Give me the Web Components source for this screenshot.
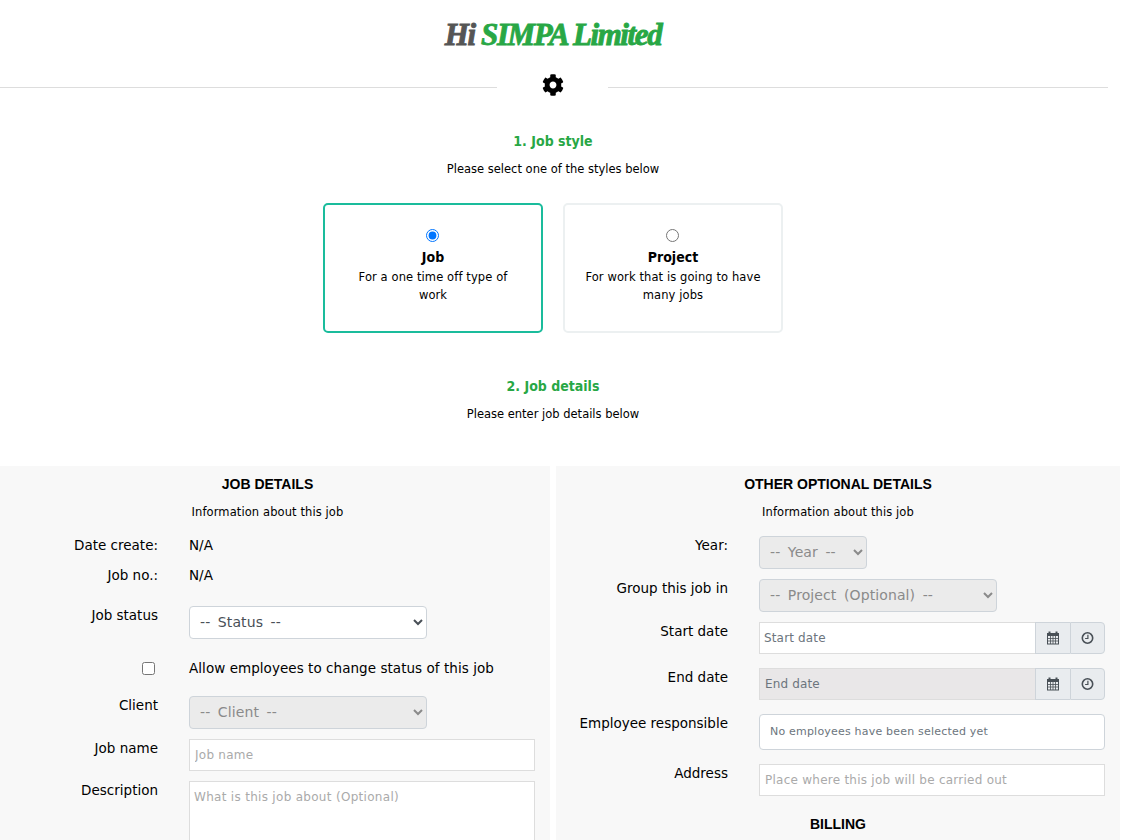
<!DOCTYPE html>
<html>
<head>
<meta charset="utf-8">
<title>Job</title>
<style>
  html, body { margin: 0; padding: 0; background: #fff; }
  body { font-family: "DejaVu Sans", sans-serif; font-size: 14px; color: #000; height: 840px; overflow: hidden; }
  .panels { display: grid; grid-template-columns: 550px 564px; gap: 6px; margin-top: 42px; }
</style>
</head>
<body>
<job-header>
  <span style="color:#555">Hi</span> <span style="color:#28a745">SIMPA Limited</span>
</job-header>
<section-heading style="margin-top:30px" title="1. Job style" text="Please select one of the styles below"></section-heading>
<style-picker>
  <style-card selected title="Job" text="For a one time off type of work"></style-card>
  <style-card title="Project" text="For work that is going to have many jobs"></style-card>
</style-picker>
<section-heading style="margin-top:43px" title="2. Job details" text="Please enter job details below"></section-heading>
<div class="panels">
  <form-panel title="JOB DETAILS" text="Information about this job" label-width="158" title-width="535">
    <form-row label="Date create:" style="margin-top:8px;height:30px" plain>N/A</form-row>
    <form-row label="Job no.:" style="height:30px" plain>N/A</form-row>
    <form-row label="Job status" style="margin-top:16px"><form-select width="238" text="-- Status --"></form-select></form-row>
    <form-check style="margin-top:19px">Allow employees to change status of this job</form-check>
    <form-row label="Client" style="margin-top:18px"><form-select width="238" disabled text="-- Client --"></form-select></form-row>
    <form-row label="Job name" style="margin-top:10px"><form-input placeholder="Job name"></form-input></form-row>
    <form-row label="Description" style="margin-top:10px"><form-area placeholder="What is this job about (Optional)"></form-area></form-row>
  </form-panel>
  <form-panel title="OTHER OPTIONAL DETAILS" text="Information about this job" label-width="172" title-width="564">
    <form-row label="Year:" style="margin-top:14px"><form-select width="108" disabled text="-- Year --"></form-select></form-row>
    <form-row label="Group this job in" style="margin-top:10px"><form-select width="238" disabled text="-- Project (Optional) --"></form-select></form-row>
    <form-row label="Start date" style="margin-top:10px"><date-input placeholder="Start date"></date-input></form-row>
    <form-row label="End date" style="margin-top:14px"><date-input disabled placeholder="End date"></date-input></form-row>
    <form-row label="Employee responsible" style="margin-top:14px"><employee-box>No employees have been selected yet</employee-box></form-row>
    <form-row label="Address" style="margin-top:14px"><form-input placeholder="Place where this job will be carried out"></form-input></form-row>
    <panel-title style="margin-top:18px">BILLING</panel-title>
  </form-panel>
</div>

<script>
const LABEL_FONT = `"DejaVu Sans", sans-serif`;

class JobHeader extends HTMLElement {
  constructor() {
    super();
    this.attachShadow({ mode: "open" });
    this.shadowRoot.innerHTML = `
      <style>
        :host { display: block; width: 1106px; }
        h1 {
          margin: 0;
          padding-top: 15px;
          height: 40px;
          text-align: center;
          font: italic bold 31px/40px "Liberation Serif", serif;
          letter-spacing: -1.4px;
          -webkit-text-stroke: .9px currentColor;
        }
        .rule { display: flex; align-items: center; width: 1108px; height: 32px; margin-top: 14px; }
        .rule i { height: 1px; background: #ddd; margin-top: 5px; }
        .rule i:first-child { width: 497px; }
        .rule i:last-child { flex: 1; }
        .rule span { width: 111px; display: flex; justify-content: center; }
        svg { width: 22px; height: 22px; display: block; margin-top: -1px; }
      </style>
      <h1><slot></slot></h1>
      <div class="rule">
        <i></i>
        <span><svg viewBox="0 0 512 512"><path d="M487.4 315.7l-42.6-24.6c4.3-23.2 4.3-47 0-70.2l42.6-24.6c4.9-2.8 7.1-8.6 5.5-14-11.1-35.6-30-67.8-54.7-94.6-3.8-4.1-10-5.1-14.8-2.3L380.8 110c-17.9-15.4-38.5-27.3-60.8-35.1V25.8c0-5.6-3.9-10.5-9.4-11.7-36.7-8.2-74.3-7.8-109.2 0-5.5 1.2-9.4 6.1-9.4 11.7V75c-22.2 7.9-42.8 19.8-60.8 35.1L88.7 85.5c-4.9-2.8-11-1.9-14.8 2.3-24.7 26.7-43.6 58.9-54.7 94.6-1.7 5.4.6 11.2 5.5 14L67.3 221c-4.3 23.2-4.3 47 0 70.2l-42.6 24.6c-4.9 2.8-7.1 8.6-5.5 14 11.1 35.6 30 67.8 54.7 94.6 3.8 4.1 10 5.1 14.8 2.3l42.6-24.6c17.9 15.4 38.5 27.3 60.8 35.1v49.2c0 5.6 3.9 10.5 9.4 11.7 36.7 8.2 74.3 7.8 109.2 0 5.5-1.2 9.4-6.1 9.4-11.7v-49.2c22.2-7.9 42.8-19.8 60.8-35.1l42.6 24.6c4.9 2.8 11 1.9 14.8-2.3 24.7-26.7 43.6-58.9 54.7-94.6 1.5-5.5-.7-11.3-5.6-14.1zM256 336c-44.1 0-80-35.9-80-80s35.9-80 80-80 80 35.9 80 80-35.9 80-80 80z"/></svg></span>
        <i></i>
      </div>
    `;
  }
}

class SectionHeading extends HTMLElement {
  connectedCallback() {
    if (this.shadowRoot) return;
    this.attachShadow({ mode: "open" });
    this.shadowRoot.innerHTML = `
      <style>
        :host { display: block; width: 1106px; text-align: center; }
        h2 { margin: 0; font: bold 14px/20px ${LABEL_FONT}; font-stretch: condensed; color: #28a745; }
        p { margin: 8px 0 0; font: 11.5px/20px ${LABEL_FONT}; color: #000; }
      </style>
      <h2>${this.getAttribute("title")}</h2>
      <p>${this.getAttribute("text")}</p>
    `;
  }
}

class StylePicker extends HTMLElement {
  constructor() {
    super();
    this.attachShadow({ mode: "open" });
    this.shadowRoot.innerHTML = `
      <style>
        :host { display: flex; justify-content: center; gap: 20px; width: 1106px; margin-top: 24px; }
      </style>
      <slot></slot>
    `;
  }
}

class StyleCard extends HTMLElement {
  connectedCallback() {
    if (this.shadowRoot) return;
    const selected = this.hasAttribute("selected");
    this.attachShadow({ mode: "open" });
    this.shadowRoot.innerHTML = `
      <style>
        :host {
          display: block;
          box-sizing: border-box;
          width: 220px;
          height: 130px;
          padding: 24px 20px 0;
          border: 2px solid ${selected ? "#1abc9c" : "#ecf0f1"};
          border-radius: 5px;
          text-align: center;
        }
        input { display: block; margin: 0 0 0 calc(50% - 7px); width: 13px; height: 13px; }
        b { display: block; margin-top: 5px; font: bold 14px/20px ${LABEL_FONT}; font-stretch: condensed; }
        p { margin: 1px 0 0; font: 11.5px/18px ${LABEL_FONT}; letter-spacing: .1px; }
      </style>
      <input type="radio" name="job-style" ${selected ? "checked" : ""}>
      <b>${this.getAttribute("title")}</b>
      <p>${this.getAttribute("text")}</p>
    `;
  }
}

class PanelTitle extends HTMLElement {
  constructor() {
    super();
    this.attachShadow({ mode: "open" });
    this.shadowRoot.innerHTML = `
      <style>
        :host {
          display: block;
          width: var(--title-width);
          text-align: center;
          font: bold 14px/20px "Liberation Sans", Arial, sans-serif;
          color: #000;
        }
      </style>
      <slot></slot>
    `;
  }
}

class FormPanel extends HTMLElement {
  connectedCallback() {
    if (this.shadowRoot) return;
    this.style.setProperty("--label-width", this.getAttribute("label-width") + "px");
    this.style.setProperty("--title-width", this.getAttribute("title-width") + "px");
    this.attachShadow({ mode: "open" });
    this.shadowRoot.innerHTML = `
      <style>
        :host { display: block; background: #f8f8f8; padding-top: 8px; height: 366px; overflow: hidden; }
        .sub { margin: 8px 0 0; width: var(--title-width); text-align: center; font: 11.5px/20px ${LABEL_FONT}; letter-spacing: .1px; }
      </style>
      <panel-title>${this.getAttribute("title")}</panel-title>
      <p class="sub">${this.getAttribute("text")}</p>
      <slot></slot>
    `;
  }
}

class FormRow extends HTMLElement {
  connectedCallback() {
    if (this.shadowRoot) return;
    const plain = this.hasAttribute("plain");
    this.attachShadow({ mode: "open" });
    this.shadowRoot.innerHTML = `
      <style>
        :host {
          display: grid;
          grid-template-columns: var(--label-width) 346px;
          column-gap: 31px;
          font: 13.5px/18px ${LABEL_FONT};
          ${plain ? "align-items: center;" : ""}
        }
        label { text-align: right; white-space: nowrap; }
      </style>
      <label>${this.getAttribute("label")}</label>
      <div><slot></slot></div>
    `;
  }
}

class FormCheck extends HTMLElement {
  constructor() {
    super();
    this.attachShadow({ mode: "open" });
    this.shadowRoot.innerHTML = `
      <style>
        :host {
          display: grid;
          grid-template-columns: var(--label-width) 346px;
          column-gap: 31px;
          font: 13.5px/20px ${LABEL_FONT};
          letter-spacing: .05px;
        }
        div { display: flex; justify-content: flex-end; padding-right: 3px; }
        input { margin: 4px 0 0; width: 13px; height: 13px; }
        span { white-space: nowrap; }
      </style>
      <div><input type="checkbox"></div>
      <span><slot></slot></span>
    `;
  }
}

class FormSelect extends HTMLElement {
  connectedCallback() {
    if (this.shadowRoot) return;
    const disabled = this.hasAttribute("disabled");
    this.attachShadow({ mode: "open" });
    this.shadowRoot.innerHTML = `
      <style>
        :host { display: block; }
        select {
          display: block;
          box-sizing: border-box;
          width: ${this.getAttribute("width")}px;
          height: 33px;
          padding: 0 6px 2px;
          border: 1px solid #ced4da;
          border-radius: 4px;
          background-color: ${disabled ? "#ebebeb" : "#fff"};
          color: ${disabled ? "#8a8a8a" : "#495057"};
          opacity: 1;
          font: 14px ${LABEL_FONT};
          letter-spacing: .1px;
          word-spacing: 3px;
        }
      </style>
      <select ${disabled ? "disabled" : ""}><option>${this.getAttribute("text")}</option></select>
    `;
  }
}

class FormInput extends HTMLElement {
  connectedCallback() {
    if (this.shadowRoot) return;
    this.attachShadow({ mode: "open" });
    this.shadowRoot.innerHTML = `
      <style>
        :host { display: block; }
        input {
          display: block;
          box-sizing: border-box;
          width: 346px;
          height: 32px;
          padding: 0 5px;
          border: 1px solid #ddd;
          background: #fff;
          font: 12px ${LABEL_FONT};
          letter-spacing: .25px;
          outline: none;
        }
        input::placeholder { color: #aaa; opacity: 1; }
      </style>
      <input type="text" placeholder="${this.getAttribute("placeholder")}">
    `;
  }
}

class FormArea extends HTMLElement {
  connectedCallback() {
    if (this.shadowRoot) return;
    this.attachShadow({ mode: "open" });
    this.shadowRoot.innerHTML = `
      <style>
        :host { display: block; }
        textarea {
          display: block;
          box-sizing: border-box;
          width: 346px;
          height: 100px;
          padding: 7px 4px;
          border: 1px solid #ddd;
          background: #fff;
          resize: none;
          font: 12px/16px ${LABEL_FONT};
          letter-spacing: .3px;
        }
        textarea::placeholder { color: #aaa; opacity: 1; }
      </style>
      <textarea placeholder="${this.getAttribute("placeholder")}"></textarea>
    `;
  }
}

class DateInput extends HTMLElement {
  connectedCallback() {
    if (this.shadowRoot) return;
    const disabled = this.hasAttribute("disabled");
    this.attachShadow({ mode: "open" });
    this.shadowRoot.innerHTML = `
      <style>
        :host { display: flex; width: 346px; height: 32px; box-sizing: border-box; }
        input {
          flex: 1;
          min-width: 0;
          box-sizing: border-box;
          height: 32px;
          padding: 0 ${disabled ? 5 : 4}px;
          border: 1px solid #ddd;
          border-right: 0;
          background: ${disabled ? "#e9e7e8" : "#fff"};
          font: 12px ${LABEL_FONT};
          letter-spacing: .15px;
        }
        input::placeholder { color: #6c757d; opacity: 1; }
        .addon {
          box-sizing: border-box;
          width: 35px;
          height: 32px;
          display: flex;
          align-items: center;
          justify-content: center;
          background: #e9ecef;
          border: 1px solid #ced4da;
          border-right: 0;
        }
        .addon:last-child { border-right: 1px solid #ced4da; border-radius: 0 4px 4px 0; }
        svg { display: block; width: 14px; height: 14px; }
      </style>
      <input type="text" placeholder="${this.getAttribute("placeholder")}" ${disabled ? "disabled" : ""}>
      <div class="addon">
        <svg viewBox="0 0 14 14" fill="none" stroke="#495057">
          <rect x="1.5" y="2.5" width="11" height="10.5" stroke-width="1"/>
          <rect x="1" y="2" width="12" height="3" fill="#495057" stroke="none"/>
          <path d="M3.5 .5v3M10.5 .5v3" stroke-width="2" stroke="#495057"/>
          <path d="M1 7.5h12M1 10h12M4.5 5v8M7 5v8M9.5 5v8" stroke-width=".8"/>
        </svg>
      </div>
      <div class="addon">
        <svg viewBox="0 0 14 14" fill="none" stroke="#495057">
          <circle cx="6.5" cy="7" r="5.2" stroke-width="1.6"/>
          <path d="M6.9 3.8v3.7H4.1" stroke-width="1.2"/>
        </svg>
      </div>
    `;
  }
}

class EmployeeBox extends HTMLElement {
  constructor() {
    super();
    this.attachShadow({ mode: "open" });
    this.shadowRoot.innerHTML = `
      <style>
        :host {
          display: flex;
          align-items: center;
          box-sizing: border-box;
          width: 346px;
          height: 36px;
          padding: 0 10px;
          background: #fff;
          border: 1px solid #ced4da;
          border-radius: 4px;
          font: 11px/16px ${LABEL_FONT};
          letter-spacing: .2px;
          color: #6c757d;
          white-space: nowrap;
        }
      </style>
      <slot></slot>
    `;
  }
}

customElements.define("panel-title", PanelTitle);
customElements.define("job-header", JobHeader);
customElements.define("section-heading", SectionHeading);
customElements.define("style-picker", StylePicker);
customElements.define("style-card", StyleCard);
customElements.define("form-panel", FormPanel);
customElements.define("form-row", FormRow);
customElements.define("form-check", FormCheck);
customElements.define("form-select", FormSelect);
customElements.define("form-input", FormInput);
customElements.define("form-area", FormArea);
customElements.define("date-input", DateInput);
customElements.define("employee-box", EmployeeBox);
</script>
</body>
</html>
